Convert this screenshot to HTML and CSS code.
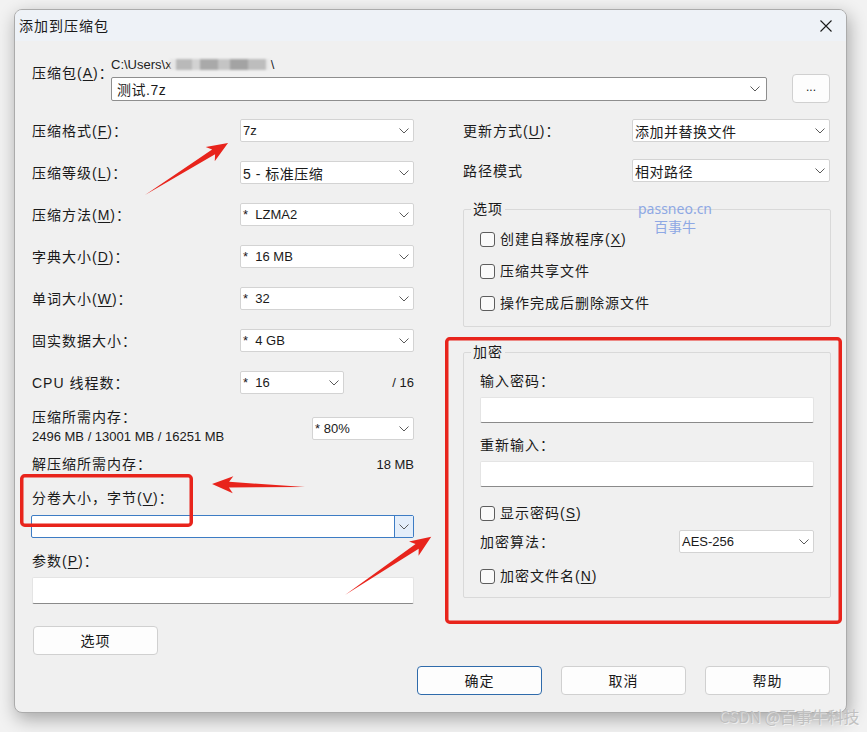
FILE: index.html
```html
<!DOCTYPE html>
<html lang="zh-CN">
<head>
    <meta charset="UTF-8">
    <title>添加到压缩包</title>
    <link rel="stylesheet" href="styles.css">
</head>
<body>
    <div class="window">
        <div class="titlebar">
            <span class="title">添加到压缩包</span>
            <svg class="close" width="12" height="12" viewBox="0 0 12 12">
                <path d="M0.5 0.5 L11.5 11.5 M11.5 0.5 L0.5 11.5" stroke="#1b1b1b" stroke-width="1.1" fill="none"/>
            </svg>
        </div>

        <div class="content">
            <section class="archive">
                <div class="archive-label zh">压缩包(<u>A</u>)：</div>
                <div class="archive-field">
                    <div class="path">C:\Users\x<span class="blur"></span>\</div>
                    <div class="combo combo-path">
                        <span class="zh-value">测试.7z</span>
                        <svg class="chev" width="10" height="6" viewBox="0 0 10 6"><path d="M0.5 0.5 L5 5 L9.5 0.5"/></svg>
                    </div>
                </div>
                <button class="btn btn-browse">...</button>
            </section>

            <section class="columns">
                <div class="col-left">
                    <div class="field">
                        <span class="zh">压缩格式(<u>F</u>)：</span>
                        <div class="combo"><span>7z</span><svg class="chev" width="10" height="6" viewBox="0 0 10 6"><path d="M0.5 0.5 L5 5 L9.5 0.5"/></svg></div>
                    </div>
                    <div class="field">
                        <span class="zh">压缩等级(<u>L</u>)：</span>
                        <div class="combo"><span class="zh-value">5 - 标准压缩</span><svg class="chev" width="10" height="6" viewBox="0 0 10 6"><path d="M0.5 0.5 L5 5 L9.5 0.5"/></svg></div>
                    </div>
                    <div class="field">
                        <span class="zh">压缩方法(<u>M</u>)：</span>
                        <div class="combo"><span>*&nbsp; LZMA2</span><svg class="chev" width="10" height="6" viewBox="0 0 10 6"><path d="M0.5 0.5 L5 5 L9.5 0.5"/></svg></div>
                    </div>
                    <div class="field">
                        <span class="zh">字典大小(<u>D</u>)：</span>
                        <div class="combo"><span>*&nbsp; 16 MB</span><svg class="chev" width="10" height="6" viewBox="0 0 10 6"><path d="M0.5 0.5 L5 5 L9.5 0.5"/></svg></div>
                    </div>
                    <div class="field">
                        <span class="zh">单词大小(<u>W</u>)：</span>
                        <div class="combo"><span>*&nbsp; 32</span><svg class="chev" width="10" height="6" viewBox="0 0 10 6"><path d="M0.5 0.5 L5 5 L9.5 0.5"/></svg></div>
                    </div>
                    <div class="field">
                        <span class="zh">固实数据大小：</span>
                        <div class="combo"><span>*&nbsp; 4 GB</span><svg class="chev" width="10" height="6" viewBox="0 0 10 6"><path d="M0.5 0.5 L5 5 L9.5 0.5"/></svg></div>
                    </div>
                    <div class="field field-last">
                        <span class="zh">CPU 线程数：</span>
                        <div class="cpu">
                            <div class="combo combo-cpu"><span>*&nbsp; 16</span><svg class="chev" width="10" height="6" viewBox="0 0 10 6"><path d="M0.5 0.5 L5 5 L9.5 0.5"/></svg></div>
                            <span class="num">/ 16</span>
                        </div>
                    </div>

                    <div class="memory">
                        <div>
                            <div class="mem-label zh">压缩所需内存：</div>
                            <div class="mem-value">2496 MB / 13001 MB / 16251 MB</div>
                        </div>
                        <div class="combo combo-mem"><span>* 80%</span><svg class="chev" width="10" height="6" viewBox="0 0 10 6"><path d="M0.5 0.5 L5 5 L9.5 0.5"/></svg></div>
                    </div>
                    <div class="decomp">
                        <span class="zh">解压缩所需内存：</span>
                        <span class="num">18 MB</span>
                    </div>

                    <div class="split-label zh">分卷大小，字节(<u>V</u>)：</div>
                    <div class="combo combo-split">
                        <span></span>
                        <span class="drop-btn"><svg class="chev" width="10" height="6" viewBox="0 0 10 6"><path d="M0.5 0.5 L5 5 L9.5 0.5"/></svg></span>
                    </div>

                    <div class="params-label zh">参数(<u>P</u>)：</div>
                    <div class="text-input params-input"></div>

                    <button class="btn btn-options zh">选项</button>
                </div>

                <div class="col-right">
                    <div class="field field-right">
                        <span class="zh">更新方式(<u>U</u>)：</span>
                        <div class="combo"><span class="zh-value">添加并替换文件</span><svg class="chev" width="10" height="6" viewBox="0 0 10 6"><path d="M0.5 0.5 L5 5 L9.5 0.5"/></svg></div>
                    </div>
                    <div class="field field-right field-path">
                        <span class="zh">路径模式</span>
                        <div class="combo"><span class="zh-value">相对路径</span><svg class="chev" width="10" height="6" viewBox="0 0 10 6"><path d="M0.5 0.5 L5 5 L9.5 0.5"/></svg></div>
                    </div>

                    <fieldset class="group group-options">
                        <legend class="zh">选项</legend>
                        <label class="check"><span class="box"></span><span class="zh">创建自释放程序(<u>X</u>)</span></label>
                        <label class="check"><span class="box"></span><span class="zh">压缩共享文件</span></label>
                        <label class="check"><span class="box"></span><span class="zh">操作完成后删除源文件</span></label>
                    </fieldset>

                    <fieldset class="group group-crypt">
                        <legend class="zh">加密</legend>
                        <div class="crypt-label zh">输入密码：</div>
                        <div class="text-input pass-input"></div>
                        <div class="crypt-label crypt-label-2 zh">重新输入：</div>
                        <div class="text-input pass-input"></div>
                        <label class="check check-show"><span class="box"></span><span class="zh">显示密码(<u>S</u>)</span></label>
                        <div class="algo">
                            <span class="zh">加密算法：</span>
                            <div class="combo combo-algo"><span>AES-256</span><svg class="chev" width="10" height="6" viewBox="0 0 10 6"><path d="M0.5 0.5 L5 5 L9.5 0.5"/></svg></div>
                        </div>
                        <label class="check check-names"><span class="box"></span><span class="zh">加密文件名(<u>N</u>)</span></label>
                    </fieldset>
                </div>
            </section>

            <section class="footer">
                <button class="btn btn-default zh">确定</button>
                <button class="btn zh">取消</button>
                <button class="btn zh">帮助</button>
            </section>
        </div>
    </div>

    <div class="wm-passneo">passneo.cn<br><span>百事牛</span></div>

    <svg class="marks" width="867" height="732" viewBox="0 0 867 732">
        <g fill="none" stroke="#e8241c" stroke-width="3.5">
            <rect x="21.75" y="475.75" width="169.5" height="49.5" rx="3"/>
            <rect x="446.75" y="338.75" width="393.5" height="283.5" rx="3"/>
        </g>
        <g fill="#e8241c">
            <path transform="translate(145 195) rotate(-32.1)" d="M0 0 L81 -2.8 L77 -8.5 L98 0 L77 8.5 L81 2.8 Z"/>
            <path transform="translate(305 487) rotate(181.8)" d="M0 0 L76 -2.8 L72 -8.5 L93 0 L72 8.5 L76 2.8 Z"/>
            <path transform="translate(345 595) rotate(-34)" d="M0 0 L87 -2.8 L83 -8.5 L104 0 L83 8.5 L87 2.8 Z"/>
        </g>
    </svg>

    <div class="wm-csdn">CSDN @百事牛科技</div>
</body>
</html>
```

FILE: styles.css
```css
*{
    padding: 0;
    margin: 0;
    box-sizing: border-box;
}
body{
    width: 867px;
    height: 732px;
    overflow: hidden;
    position: relative;
    background-color: #f2f2f2;
    padding: 9px 0 0 14px;
    font-family: "Liberation Sans", "Noto Sans CJK SC", sans-serif;
    font-size: 14px;
    color: #1a1a1a;
}
u{
    text-decoration-thickness: 1px;
    text-underline-offset: 2px;
}
.zh{
    letter-spacing: 1px;
    line-height: 18px;
}
.zh-value{
    font-size: 14px;
    letter-spacing: .5px;
}

/* window frame */
.window{
    width: 833px;
    height: 704px;
    background-color: #f0f0f0;
    border: 1px solid #ababab;
    border-radius: 8px;
    overflow: hidden;
    box-shadow: 2px 6px 18px rgba(0, 0, 0, .32);
}
.titlebar{
    height: 31px;
    background-color: #eef2f7;
    display: flex;
    align-items: center;
    justify-content: space-between;
    padding: 0 14px 0 4px;
}
.title{
    letter-spacing: 1px;
    line-height: 18px;
}
.content{
    padding: 16px 15px 0 17px;
}

/* controls */
.combo{
    height: 23px;
    background-color: #fff;
    border: 1px solid #d3d3d3;
    border-radius: 2px;
    display: flex;
    align-items: center;
    justify-content: space-between;
    padding: 0 4px 0 2px;
    font-size: 13px;
    white-space: nowrap;
}
.chev{
    flex: none;
    path{
        fill: none;
        stroke: #5a5a5a;
        stroke-width: 1;
    }
}
.text-input{
    background-color: #fff;
    border: 1px solid #e4e4e4;
    border-bottom-color: #8a8a8a;
    border-radius: 2px;
}
.btn{
    height: 29px;
    width: 125px;
    background-color: #fdfdfd;
    border: 1px solid #d0d0d0;
    border-radius: 4px;
    font-family: inherit;
    font-size: 14px;
    color: #1a1a1a;
}
.btn-default{
    border-color: #2f6bab;
}
.check{
    display: flex;
    align-items: center;
    gap: 5px;
    height: 20px;
    white-space: nowrap;
    .box{
        flex: none;
        width: 15px;
        height: 15px;
        border: 1px solid #5d5d5d;
        border-radius: 3px;
        background-color: #fafafa;
    }
}
.check + .check{
    margin-top: 12px;
}

/* archive row */
.archive{
    display: grid;
    grid-template-columns: 79px 656px 63px;
    align-items: end;
}
.archive-label{
    align-self: start;
    margin-top: 7px;
    white-space: nowrap;
}
.path{
    font-size: 13px;
    line-height: 15px;
    margin-bottom: 5px;
    display: flex;
    align-items: center;
    color: #222;
}
.blur{
    display: inline-block;
    width: 100px;
    height: 11px;
    margin: 0 1px 0 -2px;
    background: linear-gradient(90deg, #e6e6e6 0 6%, #b9b9b9 6% 22%, #d2d2d2 22% 30%, #a9a9a9 30% 48%, #c4c4c4 48% 60%, #a3a3a3 60% 78%, #bdbdbd 78% 96%, #e8e8e8 96%);
    filter: blur(1.2px);
}
.combo-path{
    height: 24px;
    border-color: #8e8e8e;
    padding-left: 5px;
    padding-right: 6px;
}
.btn-browse{
    width: 38px;
    justify-self: end;
    margin-bottom: -2px;
    font-size: 12px;
    padding-bottom: 4px;
}

/* two columns */
.columns{
    display: grid;
    grid-template-columns: 382px 368px;
    column-gap: 49px;
    align-items: start;
    margin-top: 18px;
}
.field{
    display: grid;
    grid-template-columns: 208px 174px;
    align-items: center;
    height: 23px;
    margin-bottom: 19px;
    white-space: nowrap;
}
.field-last{
    margin-bottom: 0;
}
.cpu{
    display: flex;
    justify-content: space-between;
    align-items: center;
}
.combo-cpu{
    width: 104px;
}
.num{
    font-size: 13px;
}
.memory{
    display: flex;
    justify-content: space-between;
    align-items: flex-start;
    margin-top: 14px;
}
.mem-value{
    font-size: 13px;
    line-height: 21px;
}
.combo-mem{
    width: 102px;
    margin-top: 9px;
}
.decomp{
    display: flex;
    justify-content: space-between;
    align-items: center;
    margin-top: 8px;
    height: 18px;
}
.split-label{
    margin-top: 16px;
}
.combo-split{
    margin-top: 8px;
    margin-left: -1px;
    width: 383px;
    border-color: #3d7cc4;
    padding-right: 0;
    .drop-btn{
        width: 19px;
        height: 100%;
        display: flex;
        align-items: center;
        justify-content: center;
        background-color: #e4eefa;
        border-left: 1px solid #3d7cc4;
    }
}
.params-label{
    margin-top: 14px;
}
.params-input{
    margin-top: 7px;
    height: 27px;
}
.btn-options{
    margin-top: 22px;
    margin-left: 1px;
}

/* right column */
.field-right{
    grid-template-columns: 169px 198px;
    margin-bottom: 17px;
}
.field-path{
    margin-bottom: 0;
}
.group{
    border: 1px solid #d9d9d9;
    border-radius: 2px;
    padding: 11px 16px 11px 16px;
    legend{
        padding: 0 2px;
        margin-left: -9px;
    }
}
.group-options{
    margin-top: 18px;
    padding-bottom: 13px;
}
.group-crypt{
    margin-top: 16px;
}
.pass-input{
    margin-top: 7px;
    height: 26px;
}
.crypt-label-2{
    margin-top: 13px;
}
.check.check-show{
    margin-top: 16px;
}
.algo{
    display: flex;
    justify-content: space-between;
    align-items: center;
    height: 23px;
    margin-top: 7px;
}
.combo-algo{
    width: 135px;
}
.check.check-names{
    margin-top: 13px;
}

/* bottom buttons */
.footer{
    display: flex;
    justify-content: flex-end;
    gap: 19px;
    margin-top: 11px;
    padding-right: 1px;
}

/* annotations over the screenshot */
.wm-passneo{
    position: absolute;
    left: 637px;
    top: 200px;
    width: 76px;
    text-align: center;
    font-family: "Noto Sans", "Noto Sans CJK SC", sans-serif;
    font-size: 14px;
    line-height: 18px;
    color: #8ea8e4;
}
.marks{
    position: absolute;
    left: 0;
    top: 0;
    pointer-events: none;
}
.wm-csdn{
    position: absolute;
    left: 719px;
    top: 705px;
    font-family: "Noto Sans CJK SC", sans-serif;
    font-size: 16px;
    line-height: 22px;
    color: rgba(190, 190, 190, .95);
    text-shadow: 1px 1px 0 rgba(255, 255, 255, .5);
    white-space: nowrap;
}
```
